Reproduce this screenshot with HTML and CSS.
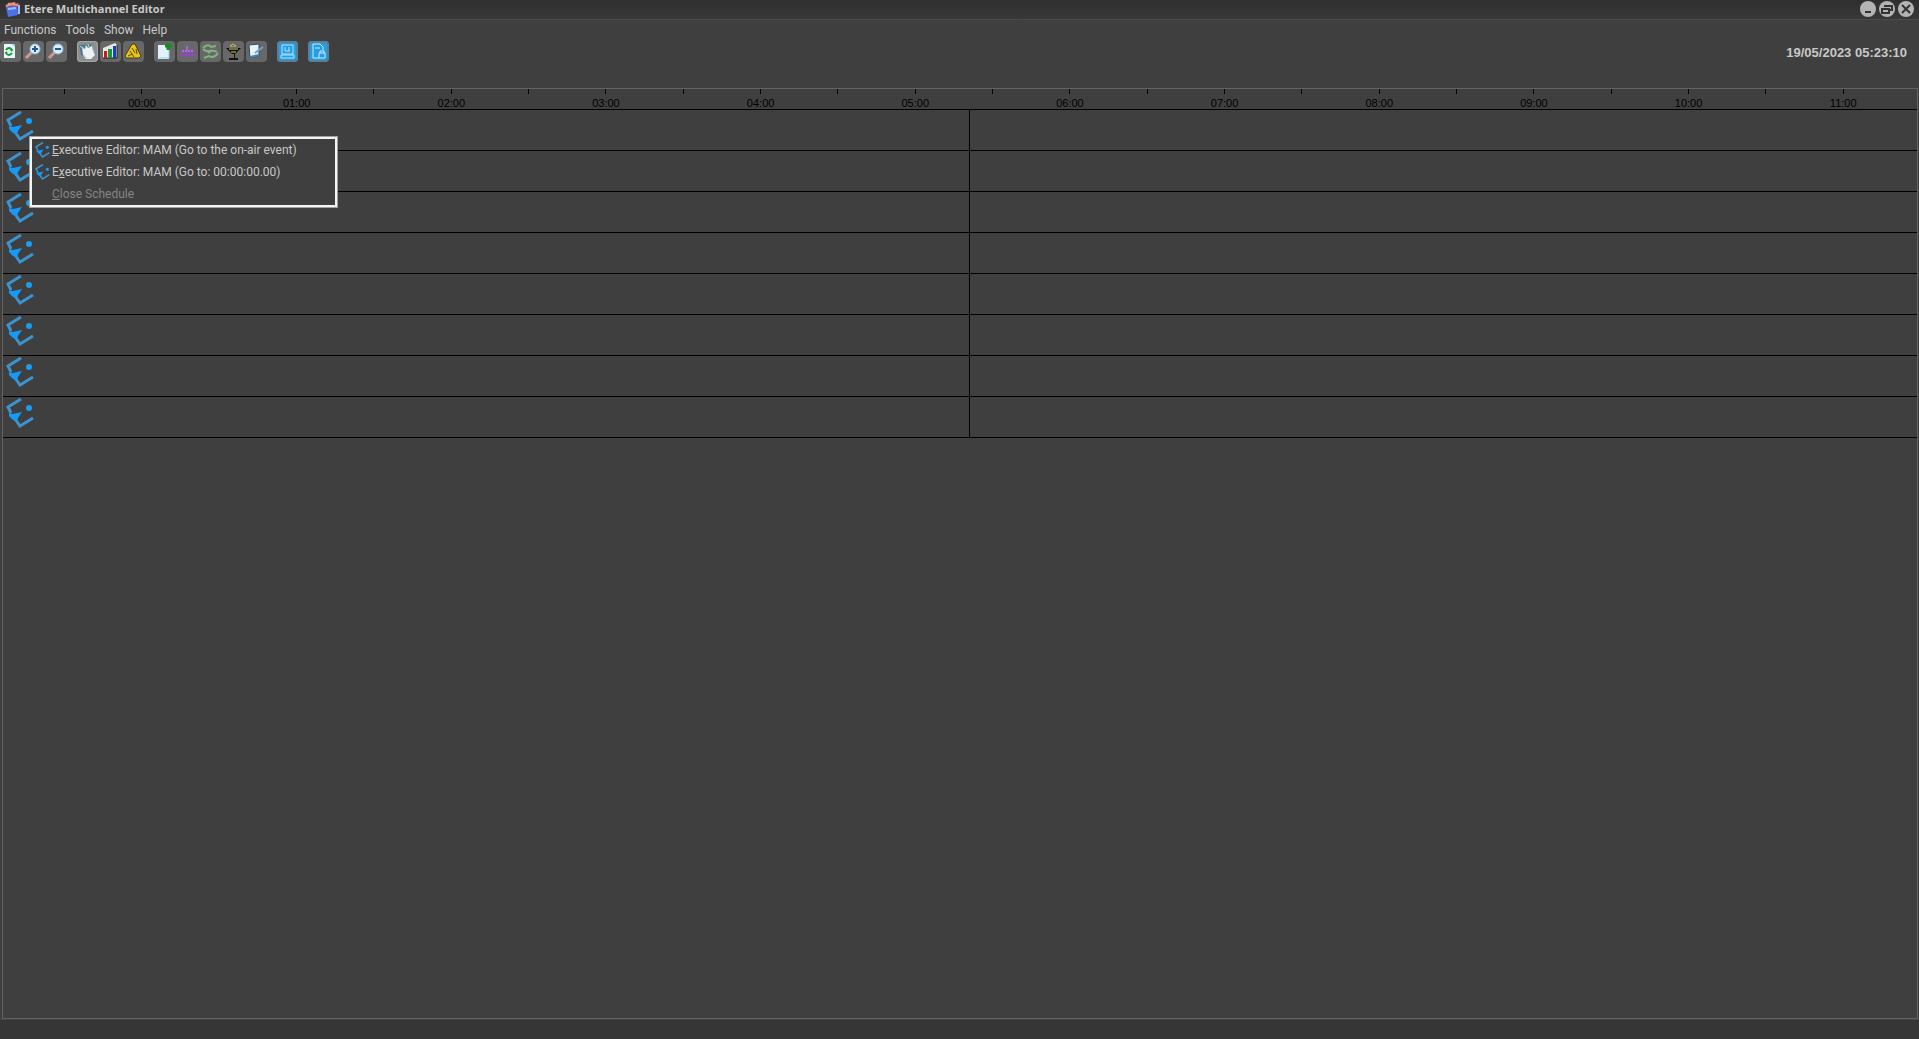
FILE: index.html
```html
<!DOCTYPE html>
<html lang="en">
<head>
<meta charset="utf-8">
<title>Etere Multichannel Editor</title>
<link rel="stylesheet" href="styles.css">
</head>
<body>
<svg class="defs" aria-hidden="true">
  <symbol id="etere" viewBox="0 0 28 30">
    <path d="M15 1 2 9l3 6M9 21l5 7 13-8" fill="none" stroke="#3d93d0" stroke-width="3"/>
    <path d="M3 15l4 1 9-2-4 6-1 3-4-1-4-4z" fill="#169af8"/>
    <circle cx="23" cy="10" r="3" fill="#1c9df2"/>
  </symbol>
</svg>
<header class="titlebar">
  <svg class="app-icon" viewBox="0 0 18 18"><path d="M1 6l4-4 10 1 1 3-1 8-9 2z" fill="#8c3c60"/><path d="M4 4l10 1M2 6l9-3" stroke="#e89a78" stroke-width="2"/><path d="M2 7l11-1 1 9-10 2z" fill="#4a72ea"/><path d="M4 9l8-1M15 5v9" stroke="#9dbcff" stroke-width="2"/></svg>
  <h1 class="title">Etere Multichannel Editor</h1>
  <div class="window-buttons">
    <button class="round" aria-label="Minimize"><svg viewBox="0 0 16 16"><path d="M5 11h6" stroke="#333" stroke-width="2"/></svg></button>
    <button class="round" aria-label="Restore"><svg viewBox="0 0 16 16"><path d="M6 6V5h7v4h-2M3 8h7v4H3z" fill="none" stroke="#333" stroke-width="2"/></svg></button>
    <button class="round" aria-label="Close"><svg viewBox="0 0 16 16"><path d="M4 4l8 8M12 4l-8 8" stroke="#333" stroke-width="2"/></svg></button>
  </div>
</header>
<nav class="menubar">
  <button>Functions</button><button>Tools</button><button>Show</button><button>Help</button>
</nav>
<div class="toolbar">
  <div class="group">
    <button class="tool" aria-label="Refresh"><svg viewBox="0 0 21 21"><path d="M4 3h11v14H4z" fill="#e9f5f8"/><path d="M12 3h3v3z" fill="#8bc8e8"/><path d="M6 9q3-4 6 0l-1 1M12 12q-3 4-6 0l1-1" fill="none" stroke="#109a30" stroke-width="2"/></svg></button>
    <button class="tool" aria-label="Zoom in"><svg viewBox="0 0 21 21"><path d="M3 17l6-6" stroke="#d09890" stroke-width="3"/><circle cx="12" cy="8" r="5" fill="#d8f0fc" stroke="#8fc0e4"/><path d="M9 8h6M12 5v6" stroke="#205a90" stroke-width="2"/></svg></button>
    <button class="tool" aria-label="Zoom out"><svg viewBox="0 0 21 21"><path d="M3 17l6-6" stroke="#d09890" stroke-width="3"/><circle cx="12" cy="8" r="5" fill="#d8f0fc" stroke="#8fc0e4"/><path d="M9 8h6" stroke="#205a90" stroke-width="2"/></svg></button>
  </div>
  <div class="group">
    <button class="tool active" aria-label="Clock"><svg viewBox="0 0 21 21"><path d="M2 4l12-1 3 9-5 6-8-4z" fill="#50788e"/><path d="M5 6l3 2 1-4 2 3 4-2 1 5 2 4-4 4H9l-3-4z" fill="#eef2f2"/><path d="M3 5l4 3M11 3l1 3M6 13l4 4M15 7l2 4" stroke="#b3d5e6"/></svg></button>
    <button class="tool" aria-label="Statistics"><svg viewBox="0 0 21 21"><path d="M3 7L15 2l2 2v13H3z" fill="#e7e8df"/><path d="M3 17h14V4" fill="none" stroke="#222"/><path d="M4 10h3v7H4z" fill="#c71b20"/><path d="M8 8h4v9H8z" fill="#13963a"/><path d="M13 5h3v12h-3z" fill="#1740c0"/></svg></button>
    <button class="tool" aria-label="Alerts"><svg viewBox="0 0 21 21"><path d="M9 3h3l6 12-2 2H3l-1-2z" fill="#e8c51c" stroke="#463d0c"/><path d="M9 7l3 5M7 10l4 6M13 8l1 5M5 15l4-2" stroke="#54490a"/></svg></button>
  </div>
  <div class="group">
    <button class="tool" aria-label="New"><svg viewBox="0 0 21 21"><path d="M4 4h9l2 2v12H4z" fill="#e2f2fa"/><path d="M5 17h10V9" fill="none" stroke="#9acce4"/><path d="M11 5h7M14 2v7" stroke="#168c20" stroke-width="3"/></svg></button>
    <button class="tool" aria-label="Timeline"><svg viewBox="0 0 21 21"><path d="M4 9h13v3H4zM3 13h15v2H3z" fill="#8f48c4"/><path d="M10 5v4" stroke="#a966d8" stroke-width="2"/><path d="M5 10h11" stroke="#c79ae6" stroke-dasharray="2 1"/></svg></button>
    <button class="tool" aria-label="Synchronize"><svg viewBox="0 0 21 21"><path d="M3 7q5-5 8-1l5-1M3 8q4 4 9 1M18 12q-4 6-9 3l-5 2M17 11q-5-3-9 1" fill="none" stroke="#82b47e" stroke-width="2"/></svg></button>
    <button class="tool" aria-label="Filter"><svg viewBox="0 0 21 21"><path d="M3 7h15l-6 6v4h3v2H6v-2h3v-4z" fill="#111"/><path d="M7 5l3-2 3 2zM6 8h9M8 11h5M10 13v4" stroke="#d5c970" stroke-width="1"/></svg></button>
    <button class="tool" aria-label="Edit"><svg viewBox="0 0 21 21"><path d="M3 4l10-1v12l-9 2z" fill="#e9f2f5" stroke="#254f78"/><path d="M4 16l9-2" stroke="#3d85bd" stroke-width="2"/><path d="M9 12l8-6" stroke="#6da2c8" stroke-width="2"/></svg></button>
  </div>
  <div class="group">
    <button class="tool blue" aria-label="Monitor"><svg viewBox="0 0 21 21"><path d="M5 4h11v9H5zM4 14h13v3H4zM8 10h5M8 6v4M12 6v4" fill="none" stroke="#b5e5ff"/></svg></button>
  </div>
  <div class="group">
    <button class="tool blue" aria-label="Secure document"><svg viewBox="0 0 21 21"><path d="M15 9V6l-3-3H5v14h6M7 7h5M11 12h6v5h-6zM12 12v-2h4v2" fill="none" stroke="#c5ebff"/></svg></button>
  </div>
  <time class="clock" datetime="2023-05-19T05:23:10">19/05/2023 05:23:10</time>
</div>
<main class="schedule">
  <div class="ruler">
    <span></span><span>00:00</span><span></span><span>01:00</span><span></span><span>02:00</span><span></span><span>03:00</span><span></span><span>04:00</span><span></span><span>05:00</span><span></span><span>06:00</span><span></span><span>07:00</span><span></span><span>08:00</span><span></span><span>09:00</span><span></span><span>10:00</span><span></span><span>11:00</span>
  </div>
  <div class="channels">
    <div class="channel"><svg><use href="#etere"/></svg></div>
    <div class="channel"><svg><use href="#etere"/></svg></div>
    <div class="channel"><svg><use href="#etere"/></svg></div>
    <div class="channel"><svg><use href="#etere"/></svg></div>
    <div class="channel"><svg><use href="#etere"/></svg></div>
    <div class="channel"><svg><use href="#etere"/></svg></div>
    <div class="channel"><svg><use href="#etere"/></svg></div>
    <div class="channel"><svg><use href="#etere"/></svg></div>
    <div class="now"></div>
    <div class="popup" role="menu">
      <button role="menuitem"><svg><use href="#etere"/></svg><span><u>E</u>xecutive Editor: MAM (Go to the on-air event)</span></button>
      <button role="menuitem"><svg><use href="#etere"/></svg><span>E<u>x</u>ecutive Editor: MAM (Go to: 00:00:00.00)</span></button>
      <button role="menuitem" disabled><svg></svg><span><u>C</u>lose Schedule</span></button>
    </div>
  </div>
</main>
<footer class="statusbar"></footer>
</body>
</html>
```
FILE: styles.css
```css
* { box-sizing: border-box; }
body {
  margin: 0;
  min-height: 100vh;
  display: flex;
  flex-direction: column;
  background: #3f3f3f;
  color: #c8c8c8;
  font: 12px/18px Roboto, "Open Sans", sans-serif;
}
button {
  margin: 0;
  padding: 0;
  border: 0;
  background: none;
  color: inherit;
  font: inherit;
}
svg { display: block; }
.defs { position: absolute; width: 0; height: 0; }
.titlebar {
  display: flex;
  align-items: center;
  height: 20px;
  padding: 0 5px 2px 4px;
  background: linear-gradient(#2f2f2f, #383838);
  border-bottom: 1px solid #4b4b4b;
}
.app-icon { width: 18px; height: 18px; }
.title {
  margin: 0 auto 0 2px;
  font: 700 11px/18px "Open Sans", "Noto Sans", sans-serif;
}
.window-buttons { display: flex; gap: 3px; }
.round {
  width: 16px;
  height: 16px;
  border-radius: 50%;
  background: #b4b4b4;
}
.menubar {
  display: flex;
  align-items: flex-end;
  gap: 9px;
  height: 20px;
  padding: 0 4px 1px;
}
.toolbar {
  display: flex;
  gap: 10px;
  height: 48px;
  padding: 1px 12px 0 0;
}
.group { display: flex; gap: 2px; }
.tool {
  width: 21px;
  height: 21px;
  border-radius: 4px;
  background: #686868;
}
.tool.active { background: #8b8f90; box-shadow: inset 0 0 0 1px #a4a4a4; }
.tool.blue { background: #289ee2; box-shadow: inset 0 0 0 2px #5b7f94; }
.clock {
  margin-left: auto;
  padding-top: 3px;
  font: 700 13px/18px "Liberation Sans", sans-serif;
}
.schedule {
  flex: 1;
  margin: 0 1px 0 2px;
  border: 1px solid #636363;
}
.ruler {
  display: flex;
  height: 21px;
  padding: 0 35px 0 23px;
  border-bottom: 1px solid #000;
  color: #000;
  font: 11px/16px "Liberation Sans", sans-serif;
}
.ruler span {
  flex: 1;
  padding-top: 6px;
  text-align: center;
  background: linear-gradient(#000, #000) center top / 1px 5px no-repeat;
}
.channels { position: relative; }
.channel {
  height: 41px;
  padding: 1px 3px;
  border-bottom: 1px solid #000;
}
.channel svg { width: 28px; height: 30px; }
.now {
  position: absolute;
  top: 0;
  bottom: 0;
  left: 50.45%;
  width: 1px;
  background: #000;
}
.popup {
  position: absolute;
  left: 27px;
  top: 27px;
  width: 307px;
  padding: 0 3px;
  border: 2px solid #f4f4f4;
  box-shadow: 0 0 0 1px #a0a0a0;
  background: #3f3f3f;
}
.popup button {
  display: flex;
  align-items: center;
  gap: 2px;
  width: 100%;
  height: 22px;
}
.popup button:disabled { color: #858585; }
.popup svg { width: 15px; height: 16px; }
.statusbar { height: 20px; background: #363636; border-top: 1px solid #444; }
```
